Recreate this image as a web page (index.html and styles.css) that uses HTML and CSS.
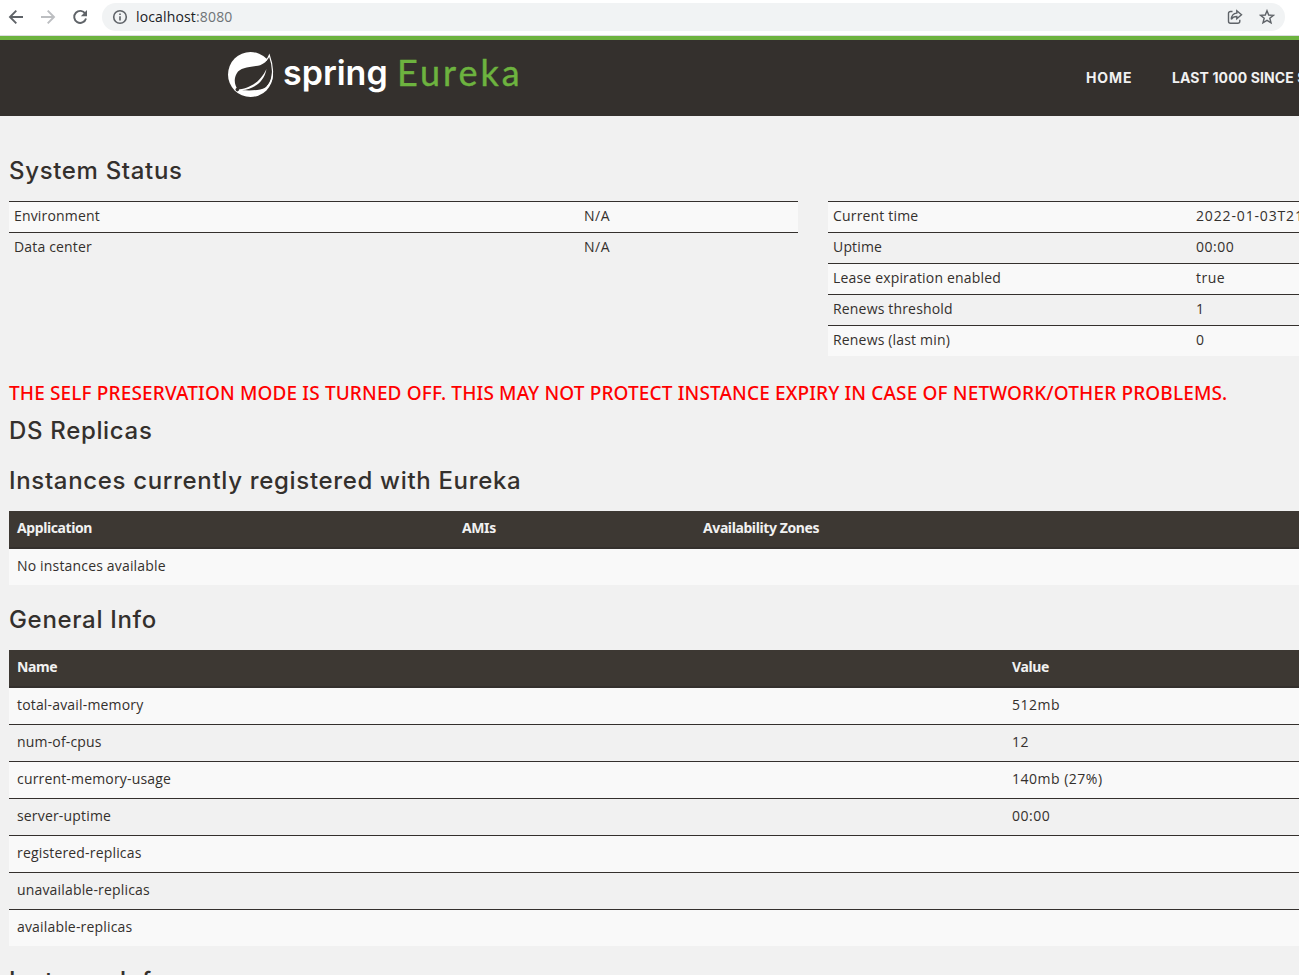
FILE: index.html
```html
<!DOCTYPE html>
<html lang="en">
<head>
<meta charset="utf-8">
<title>Eureka</title>
<link rel="stylesheet" href="styles.css">
</head>
<body>
<div class="toolbar">
  <svg class="tool back" width="16" height="16" viewBox="0 0 16 16"><path d="M15 8H2.500M8.300 1.700L2 8l6.300 6.300"/></svg>
  <svg class="tool forward" width="16" height="16" viewBox="0 0 16 16"><path d="M1 8h12.500M7.700 1.700L14 8l-6.300 6.300"/></svg>
  <svg class="tool reload" width="16" height="16" viewBox="0 0 16 16"><path d="M13.300 4.700A6 6 0 1 0 14 9.500"/><path class="solid" d="M15 1v6.200H8.800z"/></svg>
  <div class="address">
    <svg class="info" width="16" height="16" viewBox="0 0 16 16"><circle cx="8" cy="8" r="6.300"/><path d="M8 7.200v4.200M8 4.400v1.700"/></svg>
    <span class="url">localhost<span class="port">:8080</span></span>
    <svg class="share" width="16" height="16" viewBox="0 0 16 16"><path d="M5.500 2.500H3.500a2 2 0 0 0-2 2v7.700a2 2 0 0 0 2 2h7.300a2 2 0 0 0 2-2v-1.400"/><path d="M9.800 1.800l4.700 4-4.700 4V7.500C7 7.500 5.500 8.300 4.300 10.300 4.500 6.800 6.500 4.400 9.800 4.100z"/></svg>
    <svg class="star" width="16" height="16" viewBox="0 0 16 16"><path d="M8 1.700l1.700 4.300 4.700.3-3.600 3 1.200 4.500L8 11.300l-4 2.500 1.200-4.500-3.600-3L6.300 6z"/></svg>
  </div>
</div>
<header class="navbar">
  <div class="brand">
    <svg class="leaf" width="46" height="46" viewBox="0 0 46 46">
      <circle cx="22.500" cy="22.500" r="22.500" fill="#fff"/>
      <path d="M41.400 3C39.500 9 36 12.500 30 13.700 20 15.500 12 15.500 8.700 21.500 5.500 27 6.500 33 9.800 37.500 18 37 31 33 38.500 17 36 31 25 37 14 38.200c7 .3 18 .6 23-2.400C45 30 46 15 41.400 3z" fill="#34302d"/>
      <path d="M38 8.500Q40.300 6 41.300 3.200C44.500 12 47.300 27 39.500 34.500" fill="none" stroke="#fff" stroke-width="1.200"/>
      <circle cx="9.300" cy="37.600" r="1.800" fill="#34302d"/>
    </svg>
    <span class="spring">spring</span>
    <span class="eureka">Eureka</span>
  </div>
  <nav class="links"><a class="home">HOME</a><a class="last">LAST 1000 SINCE STARTUP</a></nav>
</header>
<main class="content">
  <h1>System Status</h1>
  <div class="status">
    <table class="compact wide-key">
      <tr><td>Environment</td><td>N/A</td></tr>
      <tr><td>Data center</td><td>N/A</td></tr>
    </table>
    <table class="compact">
      <tr><td>Current time</td><td class="date">2022-01-03T21:00:00 +0000</td></tr>
      <tr><td>Uptime</td><td>00:00</td></tr>
      <tr><td>Lease expiration enabled</td><td>true</td></tr>
      <tr><td>Renews threshold</td><td>1</td></tr>
      <tr><td>Renews (last min)</td><td>0</td></tr>
    </table>
  </div>
  <h4>THE SELF PRESERVATION MODE IS TURNED OFF. THIS MAY NOT PROTECT INSTANCE EXPIRY IN CASE OF NETWORK/OTHER PROBLEMS.</h4>
  <h1 class="replicas">DS Replicas</h1>
  <h1 class="registered">Instances currently registered with Eureka</h1>
  <table class="data instances">
    <thead><tr><th>Application</th><th>AMIs</th><th>Availability Zones</th></tr></thead>
    <tbody><tr><td colspan="3">No instances available</td></tr></tbody>
  </table>
  <h1 class="general">General Info</h1>
  <table class="data info-table">
    <thead><tr><th>Name</th><th>Value</th></tr></thead>
    <tbody>
      <tr><td>total-avail-memory</td><td>512mb</td></tr>
      <tr><td>num-of-cpus</td><td>12</td></tr>
      <tr><td>current-memory-usage</td><td>140mb (27%)</td></tr>
      <tr><td>server-uptime</td><td>00:00</td></tr>
      <tr><td>registered-replicas</td><td></td></tr>
      <tr><td>unavailable-replicas</td><td></td></tr>
      <tr><td>available-replicas</td><td></td></tr>
    </tbody>
  </table>
  <h1 class="instance">Instance Info</h1>
</main>
</body>
</html>
```
FILE: styles.css
```css
* { box-sizing: border-box; }
html { height: 975px; overflow: hidden; }
body { margin: 0; height: 975px; overflow: hidden; background: #f1f1f1; color: #34302d; font: 14px/20px "Open Sans", sans-serif; }
svg { flex: none; }
.toolbar { height: 36px; display: flex; align-items: flex-start; padding: 3px 14px 0 8px; background: #fff; border-bottom: 1px solid #dcdde0; }
.tool { margin: 6px 16px 0 0; fill: none; stroke: #5f6368; stroke-width: 1.9; }
.forward { stroke: #bcbec1; }
.solid { fill: #5f6368; stroke: none; }
.reload { margin-right: 14px; }
.address { flex: 1; height: 28px; border-radius: 14px; background: #f1f3f4; display: flex; align-items: center; padding: 0 10px; }
.info, .share, .star { fill: none; stroke: #5f6368; stroke-width: 1.4; }
.info { stroke-width: 1.6; }
.url { flex: 1; margin-left: 8px; font: 14px/20px "Open Sans", sans-serif; letter-spacing: .15px; color: #202124; }
.port { color: #6f7377; }
.star { margin-left: 16px; }
.navbar { height: 80px; background: #34302d; border-top: 4px solid #6db33f; display: flex; justify-content: space-between; overflow: hidden; }
.brand { display: flex; padding: 12px 0 0 228px; white-space: nowrap; }
.spring { width: 106px; margin-left: 9px; color: #fff; font: 600 34px/42px Inter, sans-serif; letter-spacing: 0; }
.eureka { margin-left: 8px; color: #6db33f; font: 36px/40px Lato, sans-serif; letter-spacing: 3px; -webkit-text-stroke: .4px #6db33f; }
.links { width: 213px; display: flex; gap: 40px; white-space: nowrap; padding-top: 28px; color: #f1f1f1; font: 700 14px/20px Inter, sans-serif; }
.home { width: 46px; flex: none; letter-spacing: .9px; }
.last { letter-spacing: .1px; }
.content { width: 1617px; padding: 40px 0 0 9px; }
h1 { margin: 0; font: 500 24px/30px Inter, sans-serif; letter-spacing: .67px; white-space: nowrap; }
table { width: 100%; border-collapse: separate; border-spacing: 0; table-layout: fixed; }
.status { display: flex; gap: 30px; height: 155px; margin-top: 15px; align-items: flex-start; }
.compact { width: 789px; }
td { letter-spacing: .5px; }
td:first-child { letter-spacing: .17px; }
.date { letter-spacing: .85px; }
.compact td { height: 31px; padding: 4px 5px 6px; border-top: 1px solid #34302d; }
.compact td:first-child { width: 363px; }
.compact.wide-key td:first-child { width: 570px; }
.compact tr:nth-child(odd) td { background: #f9f9f9; }
h4 { margin: 25px 0 0; color: #f00; font: 500 19px/24px "Noto Sans", sans-serif; letter-spacing: .14px; white-space: nowrap; }
.replicas { margin-top: 11px; }
.registered { margin-top: 20px; }
.data { margin-top: 15px; }
.data th { height: 38px; padding: 7px 8px 9px; text-align: left; background: #3d3833; color: #f1f1f1; border-bottom: 2px solid #34302d; font-family: "Noto Sans", sans-serif; letter-spacing: -.4px; }
.data td { height: 37px; padding: 7px 8px 9px; border-bottom: 1px solid #34302d; }
.data tbody tr:nth-child(odd) td { background: #f9f9f9; }
.data tbody tr:last-child td { border-bottom: 0; height: 36px; }
.instances th:first-child { width: 445px; }
.instances th:nth-child(2) { width: 241px; }
.general { margin-top: 20px; }
.info-table th:first-child { width: 995px; }
.instance { margin-top: 20px; }
```
